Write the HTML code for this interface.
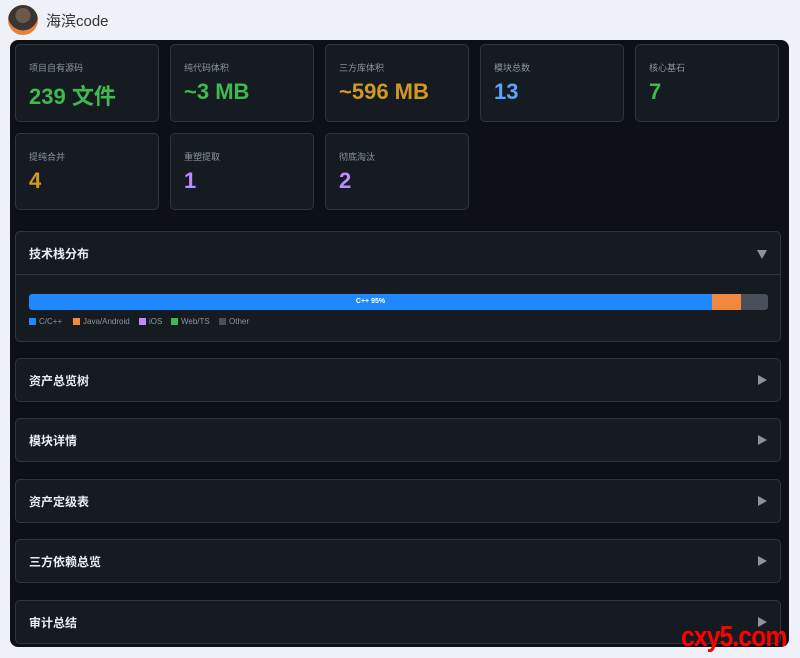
<!DOCTYPE html>
<html><head><meta charset="utf-8"><style>
*{box-sizing:border-box;margin:0;padding:0}
body{width:800px;height:658px;background:#eef2f8;font-family:"Liberation Sans","Noto Sans CJK SC",sans-serif;position:relative;overflow:hidden}
.hdr{position:absolute;left:8px;top:5px;height:30px;display:flex;align-items:center}
.av{width:30px;height:30px;border-radius:50%;background:radial-gradient(circle at 50% 35%,#6b5a4c 0 30%,#3a3532 31% 60%,#e7823a 61%);}
.name{margin-left:8px;font-size:15px;color:#333}
.panel{position:absolute;left:10px;top:40px;width:779px;height:607px;background:#0d1117;border-radius:8px;overflow:hidden}
.card{position:absolute;width:144px;background:#161b22;border:1px solid #30363d;border-radius:5px}
.card .l{position:absolute;left:13px;top:16px;font-size:9px;color:#8b949e}
.card .v{position:absolute;left:13px;top:34px;font-size:22px;font-weight:bold}
.sec{position:absolute;left:5px;width:766px;height:44px;background:#161b22;border:1px solid #30363d;border-radius:5px}
.sec .t{position:absolute;left:13px;top:13px;font-size:12px;font-weight:bold;color:#e6edf3}
.tri{position:absolute;right:13px;top:16px;width:0;height:0;border-left:9px solid #8b949e;border-top:5.5px solid transparent;border-bottom:5.5px solid transparent}
.leg{position:absolute;font-size:8px;color:#8b949e;display:flex;align-items:center}
.leg i{display:inline-block;width:7px;height:7px;margin-right:3px}
.wm{position:absolute;left:681px;top:620px;font-size:29px;font-weight:bold;color:#f00;font-family:"Liberation Sans Narrow","Liberation Sans",sans-serif;transform:scaleX(.85);transform-origin:left;letter-spacing:-1px;line-height:34px}
</style></head><body>
<div class="hdr"><div class="av"></div><div class="name">海滨code</div></div>
<div class="panel">
<div class="card" style="left:5px;top:4px;height:78px"><div class="l">项目自有源码</div><div class="v" style="color:#3fb950">239 文件</div></div>
<div class="card" style="left:160px;top:4px;height:78px"><div class="l">纯代码体积</div><div class="v" style="color:#3fb950">~3 MB</div></div>
<div class="card" style="left:315px;top:4px;height:78px"><div class="l">三方库体积</div><div class="v" style="color:#d29922">~596 MB</div></div>
<div class="card" style="left:470px;top:4px;height:78px"><div class="l">模块总数</div><div class="v" style="color:#58a6ff">13</div></div>
<div class="card" style="left:625px;top:4px;height:78px"><div class="l">核心基石</div><div class="v" style="color:#3fb950">7</div></div>
<div class="card" style="left:5px;top:93px;height:77px"><div class="l">提纯合并</div><div class="v" style="color:#d29922">4</div></div>
<div class="card" style="left:160px;top:93px;height:77px"><div class="l">重塑提取</div><div class="v" style="color:#bc8cff">1</div></div>
<div class="card" style="left:315px;top:93px;height:77px"><div class="l">彻底淘汰</div><div class="v" style="color:#bc8cff">2</div></div>
<div class="sec" style="top:191px;height:111px"><div class="t">技术栈分布</div>
<div style="position:absolute;right:13px;top:18px;border-top:9px solid #8b949e;border-left:5.5px solid transparent;border-right:5.5px solid transparent;width:0;height:0"></div>
<div style="position:absolute;left:0;right:0;top:42px;border-top:1px solid #30363d"></div>
<div style="position:absolute;left:13px;top:62px;width:739px;height:16px;border-radius:3px;overflow:hidden;display:flex">
<div style="width:683px;background:#1f88ff;color:#fff;font-size:7px;font-weight:bold;text-align:center;line-height:16px">C++ 95%</div>
<div style="width:29px;background:#f0883e"></div><div style="flex:1;background:#484f58"></div></div>
<div class="leg" style="left:13px;top:85px"><i style="background:#1f88ff"></i>C/C++</div>
<div class="leg" style="left:57px;top:85px"><i style="background:#f0883e"></i>Java/Android</div>
<div class="leg" style="left:123px;top:85px"><i style="background:#bc8cff"></i>iOS</div>
<div class="leg" style="left:155px;top:85px"><i style="background:#3fb950"></i>Web/TS</div>
<div class="leg" style="left:203px;top:85px"><i style="background:#484f58"></i>Other</div>
</div>
<div class="sec" style="top:318px"><div class="t">资产总览树</div><div class="tri"></div></div>
<div class="sec" style="top:378px"><div class="t">模块详情</div><div class="tri"></div></div>
<div class="sec" style="top:439px"><div class="t">资产定级表</div><div class="tri"></div></div>
<div class="sec" style="top:499px"><div class="t">三方依赖总览</div><div class="tri"></div></div>
<div class="sec" style="top:560px"><div class="t">审计总结</div><div class="tri"></div></div>
</div>
<div class="wm">cxy5.com</div>
</body></html>
